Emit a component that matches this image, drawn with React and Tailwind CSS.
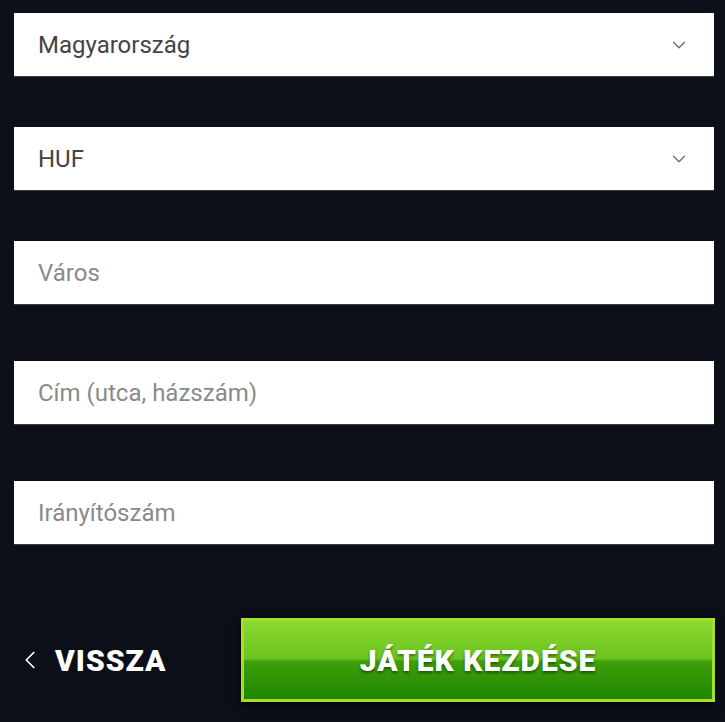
import { ChevronDown, ChevronLeft } from 'lucide-react'

const fields = [
  { label: 'Magyarország', select: true },
  { label: 'HUF', select: true },
  { label: 'Város' },
  { label: 'Cím (utca, házszám)' },
  { label: 'Irányítószám' },
]

function Field({ label, select, className }) {
  return (
    <div
      className={`flex h-[64px] items-center justify-between border-b border-[#3a3d44] bg-white pl-[24px] pr-[24px] ${className}`}
    >
      <span className={`text-[24px] ${select ? 'text-[#444444]' : 'text-[#8a8a8a]'}`}>{label}</span>
      {select && <ChevronDown size={22} strokeWidth={1.5} className="text-[#6f6f6f]" />}
    </div>
  )
}

export default function App() {
  return (
    <div className="min-h-[722px] w-[725px] bg-[#0c0f17] pt-[13px] font-['Roboto',sans-serif]">
      <div className="ml-[14px] w-[700px]">
        <Field {...fields[0]} />
        <Field {...fields[1]} className="mt-[50px]" />
        <Field {...fields[2]} className="mt-[50px]" />
        <Field {...fields[3]} className="mt-[56px]" />
        <Field {...fields[4]} className="mt-[56px]" />
      </div>

      <div className="mt-[73px] flex items-center">
        <button className="ml-[15px] flex items-center gap-[10px] text-white">
          <ChevronLeft size={30} strokeWidth={1.4} />
          <span className="text-[30px] font-black tracking-[1px]">VISSZA</span>
        </button>
        <button className="ml-auto mr-[10px] flex h-[84px] w-[474px] items-center justify-center border-[3px] border-[#a6dd2c] bg-[linear-gradient(to_bottom,#8ad92e_0%,#6cc320_48%,#3e9f0a_52%,#1e8600_100%)] shadow-[0_4px_8px_rgba(0,0,0,0.6)]">
          <span className="text-[30px] font-black tracking-[1px] text-white [text-shadow:0_2px_3px_rgba(0,0,0,0.45)]">
            JÁTÉK KEZDÉSE
          </span>
        </button>
      </div>
    </div>
  )
}
